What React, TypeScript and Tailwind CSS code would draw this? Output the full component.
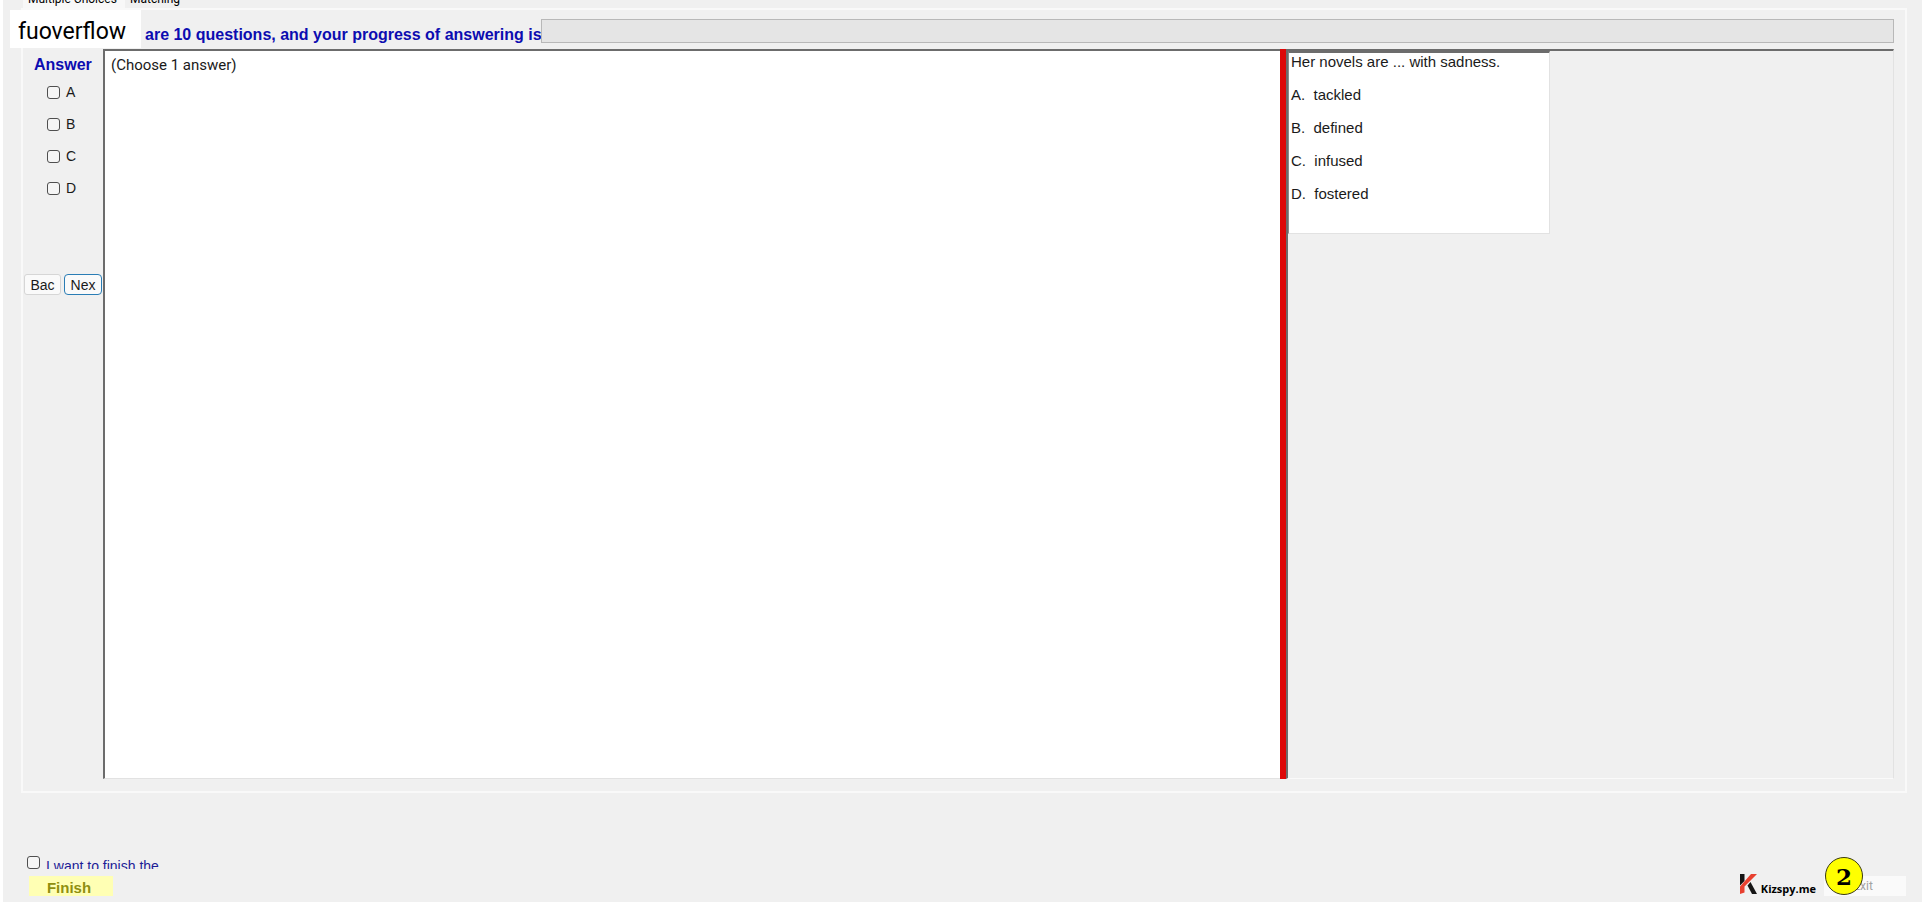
import React from "react";

const choices = ["A", "B", "C", "D"];

const options = [
  { letter: "A.", text: "tackled" },
  { letter: "B.", text: "defined" },
  { letter: "C.", text: "infused" },
  { letter: "D.", text: "fostered" },
];

const boxClass =
  "size-[13px] shrink-0 appearance-none rounded-[3px] border border-[#4f4f4f] bg-[#f5f5f5] checked:bg-[#0067c0]";

function Tabs() {
  return (
    <nav className="ml-5 flex h-2 shrink-0 items-end overflow-hidden text-[12px] leading-4 text-black">
      <button type="button" className="w-[102px] bg-[#f8f8f8] pb-px pl-[5px] text-left">
        Multiple Choices
      </button>
      <button type="button" className="px-[5px] pb-px">
        Matching
      </button>
    </nav>
  );
}

function Header() {
  return (
    <header className="flex h-[39px] shrink-0 items-start">
      <div className="relative -ml-[13px] h-[38px] w-[131px] shrink-0 bg-white pl-2 text-[23px] leading-[44px] text-black">
        fuoverflow
      </div>
      <label
        htmlFor="progress"
        className="mt-[15px] ml-1 w-[396px] shrink-0 font-[Liberation_Sans,sans-serif] text-[16px] leading-5 font-bold whitespace-nowrap text-[#0c0cb0]"
      >
        are 10 questions, and your progress of answering is
      </label>
      <div
        id="progress"
        role="progressbar"
        aria-valuenow={0}
        className="mt-[9px] mr-[11px] h-6 flex-1 border border-[#b8b8b8] bg-[#e5e5e5]"
      />
    </header>
  );
}

function Sidebar() {
  return (
    <aside className="flex w-20 shrink-0 flex-col font-[Liberation_Sans,sans-serif]">
      <h2 className="mt-2 pl-[11px] text-[16px] leading-4 font-bold text-[#0c0cb0]">
        Answer
      </h2>
      <div className="mt-[11px] flex flex-col gap-4 pl-6">
        {choices.map((c) => (
          <label key={c} className="flex h-4 items-center gap-1.5 text-[14px] leading-4">
            <input type="checkbox" className={boxClass} />
            {c}
          </label>
        ))}
      </div>
      <div className="mt-[78px] flex gap-[3px] pl-px text-[14px]">
        <button
          type="button"
          className="h-[21px] w-[37px] rounded-[3px] border border-[#d6d6d6] bg-[#fafafa] leading-5"
        >
          Bac
        </button>
        <button
          type="button"
          className="h-[21px] w-[38px] rounded-[4px] border border-[#2a7db5] bg-[#fafafa] leading-5"
        >
          Nex
        </button>
      </div>
    </aside>
  );
}

function QuestionPanel() {
  return (
    <section className="min-w-0 flex-1 border-t-2 border-r border-b border-l-2 border-t-[#6c6c6c] border-r-[#e2e2e2] border-b-[#fafafa] border-l-[#6c6c6c]">
      <div className="w-[262px] border-t-2 border-r border-b border-l border-t-[#6c6c6c] border-r-[#e2e2e2] border-b-[#e2e2e2] border-l-[#8c8c8c] bg-white pb-[29px] pl-0.5 font-[Liberation_Sans,sans-serif] text-[15px] leading-5 text-[#1a1a1a]">
        <p className="-mt-px">Her novels are ... with sadness.</p>
        <ol className="mt-[13px] flex flex-col gap-[13px]">
          {options.map((o) => (
            <li key={o.letter} className="whitespace-pre">
              {o.letter + "  " + o.text}
            </li>
          ))}
        </ol>
      </div>
    </section>
  );
}

function KizspyLogo() {
  return (
    <div className="mt-6 flex items-end gap-1">
      <svg viewBox="0 0 18 20" className="h-5 w-[18px]" aria-hidden="true">
        <path d="M1 0h4.500v7L1 11.500z" fill="#151515" />
        <path d="M12 0h6L5.500 12.500v6L1 20v-7.500z" fill="#e8402f" />
        <path d="M8.500 11.500l3-3.500L18 20h-5z" fill="#151515" />
      </svg>
      <span className="-mb-0.5 font-[Open_Sans,sans-serif] text-[11px] leading-[14px] font-bold text-black">
        Kizspy.me
      </span>
    </div>
  );
}

function Footer() {
  return (
    <footer className="flex h-[109px] shrink-0 items-start justify-between pr-4 pl-6">
      <div className="mt-[63px]">
        <label className="flex h-[13px] items-start gap-1.5 overflow-hidden font-[Liberation_Sans,sans-serif] text-[14px] leading-5 text-[#1c1c96]">
          <input type="checkbox" className={boxClass} />
          I want to finish the
        </label>
        <button
          type="button"
          className="mt-[7px] ml-0.5 block h-5 w-[84px] bg-[#ffffb4] pr-1 font-[Liberation_Sans,sans-serif] text-[15px] leading-6 font-bold text-[#8f8f10]"
        >
          Finish
        </button>
      </div>
      <div className="mt-[57px] flex items-start gap-2">
        <KizspyLogo />
        <div className="relative pt-[26px]">
          <button
            type="button"
            className="block h-5 w-[82px] bg-[#fafafa] pr-1 text-[12px] leading-5 text-[#a3a3a3]"
          >
            Exit
          </button>
          <span className="absolute top-[7px] left-px flex size-[38px] items-center justify-center rounded-full border border-[#3a3a10] bg-[#ffff00] font-[DejaVu_Serif,serif] text-[23px] leading-none font-bold text-black">
            2
          </span>
        </div>
      </div>
    </footer>
  );
}

export default function App() {
  return (
    <div className="h-screen bg-white pr-1 pb-1 pl-[3px]">
      <div className="flex h-full flex-col bg-[#f0f0f0] font-[Roboto,sans-serif] text-[#1a1a1a]">
        <Tabs />
        <main className="mr-[15px] ml-[18px] flex min-h-0 flex-1 flex-col border-2 border-[#f9f9f9] pb-3">
          <Header />
          <div className="mr-[11px] flex min-h-0 flex-1">
            <Sidebar />
            <section className="w-[1177px] shrink border-t-2 border-b border-l-2 border-t-[#6c6c6c] border-b-[#e2e2e2] border-l-[#6c6c6c] bg-white pt-1 pl-1.5 text-[15px] leading-5">
              (Choose 1 answer)
            </section>
            <div className="w-1.5 shrink-0 bg-[#dd0808]" />
            <QuestionPanel />
          </div>
        </main>
        <Footer />
      </div>
    </div>
  );
}
